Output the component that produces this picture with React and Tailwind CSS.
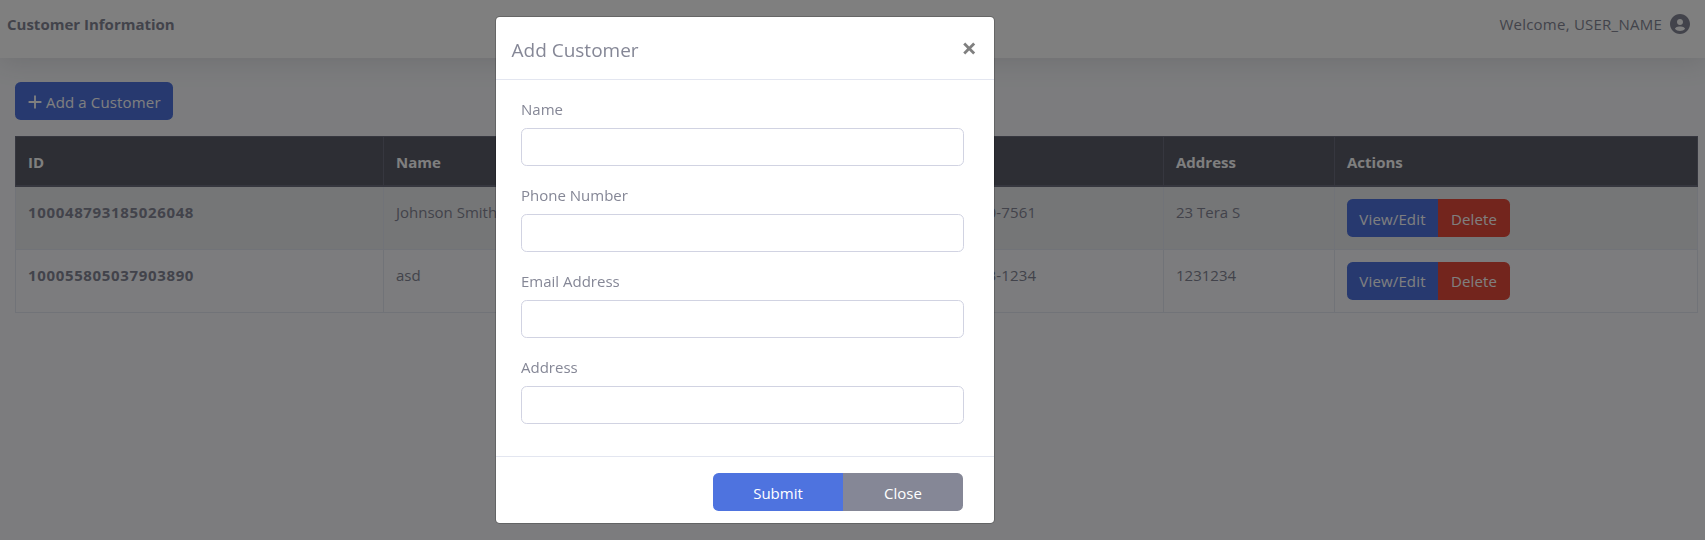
import React from "react";
import { BiPlus, BiSolidUserCircle } from "react-icons/bi";

const customers = [
  { id: "100048793185026048", name: "Johnson Smith", email: "johnson@example.com", phone: "604-500-7561", address: "23 Tera S" },
  { id: "100055805037903890", name: "asd", email: "asd@example.com", phone: "123-123-1234", address: "1231234" },
];

const columns = [
  { label: "ID", width: "w-[368px]" },
  { label: "Name", width: "w-[216px]" },
  { label: "Email", width: "w-[327px]" },
  { label: "Phone", width: "w-[237px]" },
  { label: "Address", width: "w-[171px]" },
  { label: "Actions", width: "w-[363px]" },
];

const fields = ["Name", "Phone Number", "Email Address", "Address"];

function Topbar() {
  return (
    <header className="relative flex h-[58px] items-start justify-between bg-white pl-[7px] pr-[13px] pt-3 shadow-[0_2.4px_28px_0_rgba(58,59,69,0.15)]">
      <h1 className="font-bold leading-6">Customer Information</h1>
      <div className="flex items-center gap-1.5">
        <span className="leading-6 tracking-[0.24px]">Welcome, USER_NAME</span>
        <BiSolidUserCircle className="size-6" />
      </div>
    </header>
  );
}

function Row({ customer, striped }) {
  const cell = "border border-[#e3e6f0] px-3 pb-2 pt-[13px] align-top leading-6";
  return (
    <tr className={striped ? "h-[63px] bg-black/5" : "h-[63px]"}>
      <th className={cell + " text-left font-bold tracking-[0.65px]"}>{customer.id}</th>
      <td className={cell}>{customer.name}</td>
      <td className={cell}>{customer.email}</td>
      <td className={cell + " tracking-[0.15px]"}>{customer.phone}</td>
      <td className={cell}>{customer.address}</td>
      <td className={cell}>
        <div className="-mt-px flex h-[38px] text-white">
          <button className="w-[91px] rounded-l-[5.6px] bg-[#4e73df] pt-px tracking-[0.15px]">View/Edit</button>
          <button className="w-[72px] rounded-r-[5.6px] bg-[#e74a3b] pt-px tracking-[0.1px]">Delete</button>
        </div>
      </td>
    </tr>
  );
}

function Modal() {
  return (
    <div className="fixed inset-0 bg-black/50 pl-[495px] pt-4">
      <div className="h-[508px] w-[500px] rounded-[4.8px] border border-black/20 bg-white bg-clip-padding">
        <div className="flex h-[63px] justify-between border-b border-[#e3e6f0] pl-[15.5px] pr-[17px] pt-[18px]">
          <h2 className="text-[19px] leading-[30px]">Add Customer</h2>
          <button className="h-[24px] text-[27px] font-bold leading-[23px] text-black/50">×</button>
        </div>
        <form className="flex h-[377px] flex-col gap-4 border-b border-[#e3e6f0] pl-[25px] pr-[30px] pt-[17px]">
          {fields.map((field) => (
            <label key={field} className="flex flex-col gap-[7px] pb-px">
              <span className="leading-6">{field}</span>
              <input className="h-[38px] rounded-[5.6px] border border-[#d1d3e2] bg-white px-3" />
            </label>
          ))}
        </form>
        <div className="flex justify-end pr-[31px] pt-4 text-white">
          <button className="h-[38px] w-[130px] rounded-l-[5.6px] bg-[#4e73df] pt-[2px]">Submit</button>
          <button className="h-[38px] w-[120px] rounded-r-[5.6px] bg-[#858796] pt-[2px]">Close</button>
        </div>
      </div>
    </div>
  );
}

export default function App() {
  return (
    <div className="h-[540px] overflow-hidden bg-[#f8f9fc] font-['Open_Sans','Noto_Sans',sans-serif] text-[15px] text-[#858796]">
      <Topbar />
      <main className="relative px-[15px] pt-6">
        <button className="flex h-[38px] w-[158px] items-center rounded-[5.6px] bg-[#4e73df] pl-[9px] pt-[2px] text-white">
          <BiPlus className="size-[22px] shrink-0" />
          <span className="whitespace-nowrap tracking-[0.15px]">Add a Customer</span>
        </button>
        <table className="mt-4 w-[1683px] table-fixed border-collapse">
          <thead>
            <tr className="h-[49.5px] bg-[#5a5c69] text-left text-white">
              {columns.map(({ label, width }) => (
                <th key={label} className={width + " border border-b-2 border-[#6c6e7e] px-3 pt-[3px] font-bold"}>{label}</th>
              ))}
            </tr>
          </thead>
          <tbody>
            {customers.map((customer, index) => (
              <Row key={customer.id} customer={customer} striped={index % 2 === 0} />
            ))}
          </tbody>
        </table>
      </main>
      <Modal />
    </div>
  );
}
